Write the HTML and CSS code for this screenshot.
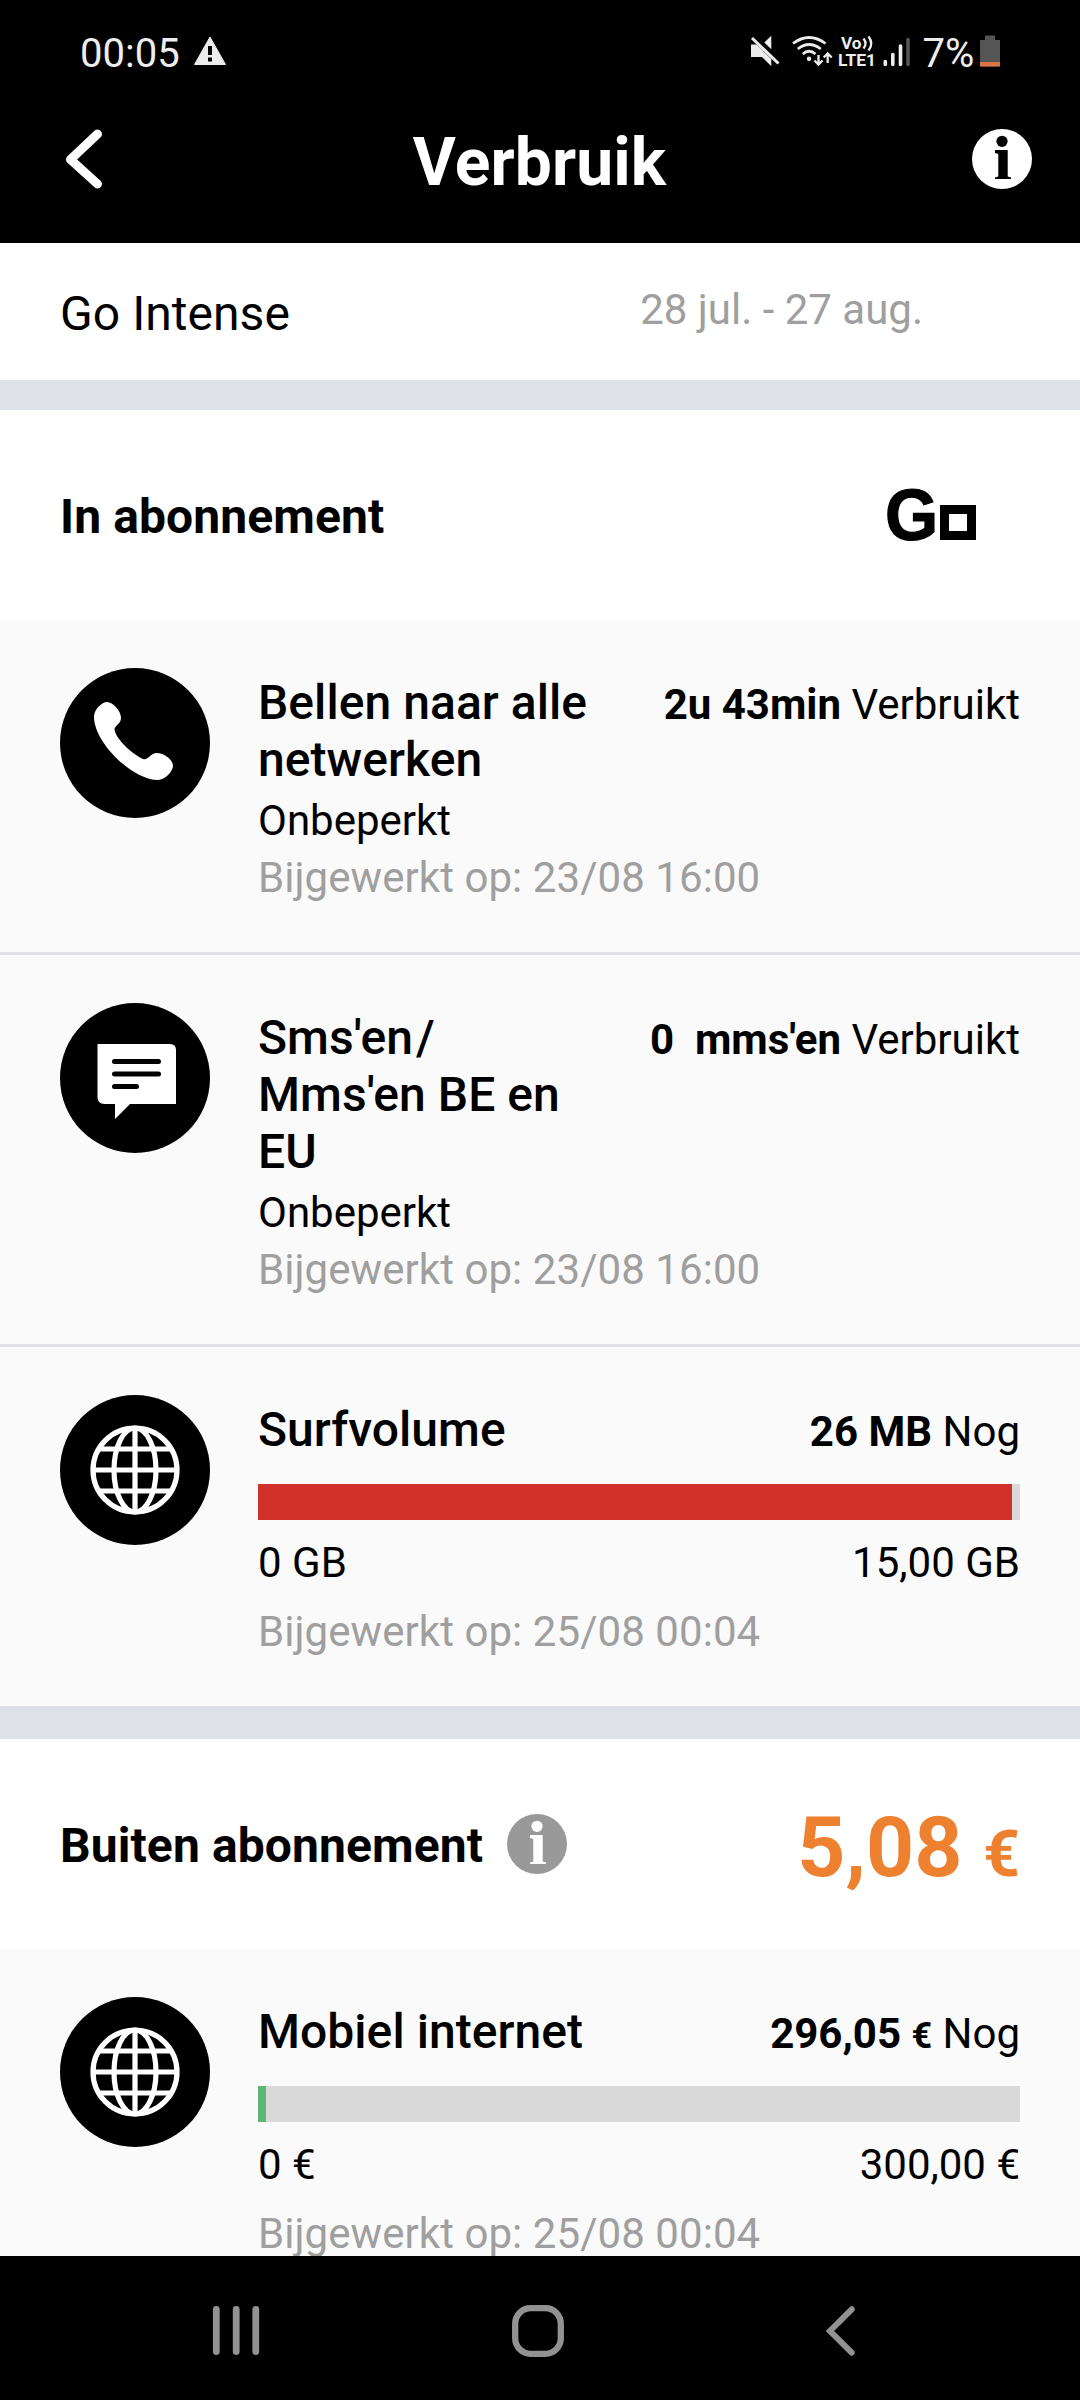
FILE: index.html
```html
<!DOCTYPE html>
<html lang="nl">
<head>
<meta charset="utf-8">
<title>Verbruik</title>
<link rel="stylesheet" href="styles.css">
</head>
<body>
<svg class="defs" width="0" height="0" aria-hidden="true">
  <symbol id="globe" viewBox="0 0 150 150">
    <g fill="none" stroke="#fff" stroke-width="5.2">
      <circle cx="75" cy="75" r="42"/>
      <ellipse cx="75" cy="75" rx="21" ry="42"/>
      <path d="M75 33v84M33 75h84M38 54h74M38 96h74"/>
    </g>
  </symbol>
  <symbol id="info" viewBox="0 0 60 60">
    <circle cx="30" cy="30" r="30" fill="currentColor"/>
    <circle cx="30" cy="12.3" r="5.6" class="info-mark"/>
    <path class="info-mark" d="M23 21h12.700v26.500l3.300 1V50H23v-1.500l3.300-1V25L23 24z"/>
  </symbol>
</svg>
<div class="screen">
  <header class="top">
    <div class="status">
      <div class="status-left">
        <span class="clock">00:05</span>
        <svg class="alert" width="32" height="29" viewBox="0 0 32 29"><path d="M16 1L31.500 28.500H.5z" fill="#ededed" stroke="#ededed" stroke-linejoin="round"/><path d="M14 10h4v9h-4zM14 21.500h4v4h-4z" fill="#000"/></svg>
      </div>
      <svg class="status-icons" width="260" height="70" viewBox="750 20 260 70">
        <g fill="#ededed">
          <path d="M751 44.500h5.500L771.300 59v7.300L762 57h-11z"/>
          <path d="M764.300 42.500l7-6.800v13.500z"/>
          <circle cx="809" cy="58.700" r="2.200"/>
        </g>
        <g fill="none" stroke="#ededed" stroke-width="2.700">
          <path d="M752 38l26.500 25.500" stroke-width="3"/>
          <path d="M793 43.500q16-12 32.500 0M797.800 49q11.200-9 23 0M802.800 54q6.200-5.500 12.700 0"/>
          <path d="M818.500 55v9.500M814.500 60.500l4 4 4-4M827.700 63v-9.500M823.700 57.500l4-4 4 4" stroke-width="2.300"/>
          <path d="M863.500 38.500q4 5 0 10M868.500 36.500q5.500 7 0 14" stroke-width="2.400"/>
        </g>
        <text class="volte" x="841" y="49" textLength="20.500" lengthAdjust="spacingAndGlyphs">Vo</text>
        <text class="volte" x="838" y="66" textLength="38" lengthAdjust="spacingAndGlyphs">LTE1</text>
        <g stroke="#ededed" stroke-width="3.600" stroke-linecap="round"><path d="M885.300 61.500v3M892.800 54.500v10M900.500 46v18.500"/><path d="M908 39.500v25" stroke="#555"/></g>
        <text class="percent" x="922.500" y="67">7%</text>
        <path d="M985 35.500h10v4.500h5v26.500h-20V40h5z" fill="#555"/>
        <path d="M980 62h20v3.500q0 1-1 1h-18q-1 0-1-1z" fill="#de7347"/>
      </svg>
    </div>
    <div class="appbar">
      <svg class="back" width="38" height="60" viewBox="0 0 38 60"><path d="M32.500 5L5.500 30.500l27 24.500" fill="none" stroke="#fff" stroke-width="9" stroke-linecap="round" stroke-linejoin="round"/></svg>
      <h1>Verbruik</h1>
      <svg class="info info-white" width="60" height="60"><use href="#info"/></svg>
    </div>
  </header>

  <main class="content">
    <section class="plan">
      <span class="plan-name">Go Intense</span>
      <span class="period">28 jul. - 27 aug.</span>
    </section>

    <section class="group">
      <div class="group-head">
        <h2>In abonnement</h2>
        <div class="go"><span class="go-g">G</span><span class="go-box"></span></div>
      </div>

      <article class="row">
        <svg class="badge" width="150" height="150" viewBox="0 0 150 150"><circle cx="75" cy="75" r="75"/><path fill="#fff" d="M34 49C34 41 42 34 47 34C53 34 61 43 61 50C61 56 54 58 54.500 62C57 73 74 87 83 91C88 93 90 85 97 85C103 85 113 91 113 98C113 103 105 112 98 112C72 112 34 74 34 49z"/></svg>
        <div class="body">
          <div class="line">
            <h3>Bellen naar alle<br>netwerken</h3>
            <p class="value"><b>2u 43min</b> Verbruikt</p>
          </div>
          <p class="limit">Onbeperkt</p>
          <p class="updated">Bijgewerkt op: 23/08 16:00</p>
        </div>
      </article>

      <article class="row">
        <svg class="badge" width="150" height="150" viewBox="0 0 150 150"><circle cx="75" cy="75" r="75"/><path fill="#fff" d="M37.500 41H110q6 0 6 6v54H70L55 116v-15H44.500q-7 0-7-7z"/><path d="M54.500 58.500h44M54.500 71h44M54.500 83.500h22" stroke="#000" stroke-width="5" stroke-linecap="round"/></svg>
        <div class="body">
          <div class="line">
            <h3>Sms'en<span class="slash">/</span><br>Mms'en BE en<br>EU</h3>
            <p class="value"><b>0&nbsp; mms'en</b> Verbruikt</p>
          </div>
          <p class="limit">Onbeperkt</p>
          <p class="updated">Bijgewerkt op: 23/08 16:00</p>
        </div>
      </article>

      <article class="row">
        <svg class="badge" width="150" height="150" viewBox="0 0 150 150"><circle cx="75" cy="75" r="75"/><use href="#globe"/></svg>
        <div class="body">
          <div class="line">
            <h3>Surfvolume</h3>
            <p class="value"><b>26 MB</b> Nog</p>
          </div>
          <div class="bar"><div class="fill fill-red" style="width:99%"></div></div>
          <div class="scale"><span>0 GB</span><span>15,00 GB</span></div>
          <p class="updated">Bijgewerkt op: 25/08 00:04</p>
        </div>
      </article>
    </section>

    <section class="group group-extra">
      <div class="group-head">
        <h2>Buiten abonnement</h2>
        <svg class="info info-gray" width="60" height="60"><use href="#info"/></svg>
        <p class="total">5,08 <span class="euro">€</span></p>
      </div>

      <article class="row">
        <svg class="badge" width="150" height="150" viewBox="0 0 150 150"><circle cx="75" cy="75" r="75"/><use href="#globe"/></svg>
        <div class="body">
          <div class="line">
            <h3>Mobiel internet</h3>
            <p class="value"><b>296,05 <span class="euro-small">€</span></b> Nog</p>
          </div>
          <div class="bar"><div class="fill fill-green" style="width:1%"></div></div>
          <div class="scale"><span>0 €</span><span>300,00 €</span></div>
          <p class="updated">Bijgewerkt op: 25/08 00:04</p>
        </div>
      </article>
    </section>
  </main>

  <nav class="nav">
    <svg width="1080" height="144" viewBox="0 0 1080 144" fill="none" stroke="#929292">
      <path d="M216.300 53.500v42M236.200 53.500v42M255.800 53.500v42" stroke-width="6.800" stroke-linecap="round"/>
      <rect x="515.200" y="52.200" width="45.600" height="45.600" rx="15.500" stroke-width="6.300"/>
      <path d="M851.700 53.300L830 75l21.700 21.700" stroke-width="6" stroke-linecap="round"/>
    </svg>
  </nav>
</div>
</body>
</html>
```
FILE: styles.css
```css
* { box-sizing: border-box; margin: 0; padding: 0; }
body { width: 1080px; background: #000; font-family: Roboto, "Liberation Sans", sans-serif; color: #000; }
svg { display: block; flex: none; }
.defs { position: absolute; }
.screen { display: flex; flex-direction: column; height: 2400px; overflow: hidden; }

.top { flex: none; height: 243px; background: #000; }
.status { display: flex; justify-content: space-between; height: 100px; padding: 20px 70px 0 80px; }
.status-left { display: flex; gap: 14px; height: 46px; margin-top: 11px; }
.clock { font-size: 40px; line-height: 46px; color: #ededed; }
.alert { margin-top: 5px; }
.volte { font-size: 17px; font-weight: 700; fill: #ededed; }
.percent { font-size: 40px; fill: #ededed; }
.appbar { display: flex; justify-content: space-between; align-items: center; height: 118px; padding: 0 48px 0 65px; }
h1 { font-size: 66px; line-height: 78px; font-weight: 700; letter-spacing: 0.1px; color: #fff; padding: 8px 0 0 4px; }
.info-white { color: #fff; fill: #000; }
.info-gray { color: #999; fill: #fff; }

.content { flex: none; height: 2013px; overflow: hidden; background: #fff; }
.plan { display: flex; align-items: flex-start; justify-content: space-between; height: 137px; padding: 42px 157px 0 60px; }
.plan-name { font-size: 48px; line-height: 57px; letter-spacing: 0.05px; }
.period { padding-top: 1px; font-size: 42px; line-height: 48px; color: #9f9f9f; }

.group { border-top: 30px solid #dfe1e9; background: #fafafa; }
.group-extra { border-top-width: 33px; }
.group-head { display: flex; align-items: center; height: 210px; padding: 0 60px; background: #fff; }
h2 { padding-top: 2px; font-size: 48px; line-height: 57px; font-weight: 700; letter-spacing: 0.1px; }
.go { display: flex; align-items: flex-end; gap: 6px; margin: 0 44px 0 auto; height: 52px; }
.go-g { width: 49px; font: 700 72px/52px "Liberation Sans", Arial, sans-serif; -webkit-text-stroke: 1.2px #000; transform: scaleX(.95); transform-origin: left; }
.go-box { width: 36px; height: 35px; margin-bottom: 1px; border: 9px solid #000; }
.info-gray { margin: 0 0 0 24px; }
.total { margin-left: auto; padding-top: 15px; font-size: 84px; line-height: 98px; font-weight: 700; color: #ee8130; }
.euro { font-size: 64px; }
.euro-small { font-size: 36px; line-height: 0; }

.row { display: flex; gap: 48px; padding: 48px 60px 46px; }
.row + .row { border-top: 3px solid #dfe1e6; }
.body { flex: 1; padding-top: 6px; }
.line { display: flex; justify-content: space-between; align-items: baseline; }
h3 { font-size: 48px; line-height: 57px; font-weight: 500; letter-spacing: 0.05px; }
.slash { margin-left: 3px; }
.limit, .updated, .scale { font-size: 42px; line-height: 57px; white-space: nowrap; }
.value { font-size: 42px; line-height: 48px; white-space: nowrap; }
.limit { margin-top: 4px; }
.updated { color: #9f9f9f; letter-spacing: 0.06px; }
.bar { height: 36px; margin: 26px 0 14px; background: #d9d9d9; }
.fill { height: 100%; }
.fill-red { background: #d13029; }
.fill-green { background: #5eb674; }
.scale { display: flex; justify-content: space-between; margin-bottom: 12px; }

.nav { flex: none; height: 144px; background: #000; }
```
